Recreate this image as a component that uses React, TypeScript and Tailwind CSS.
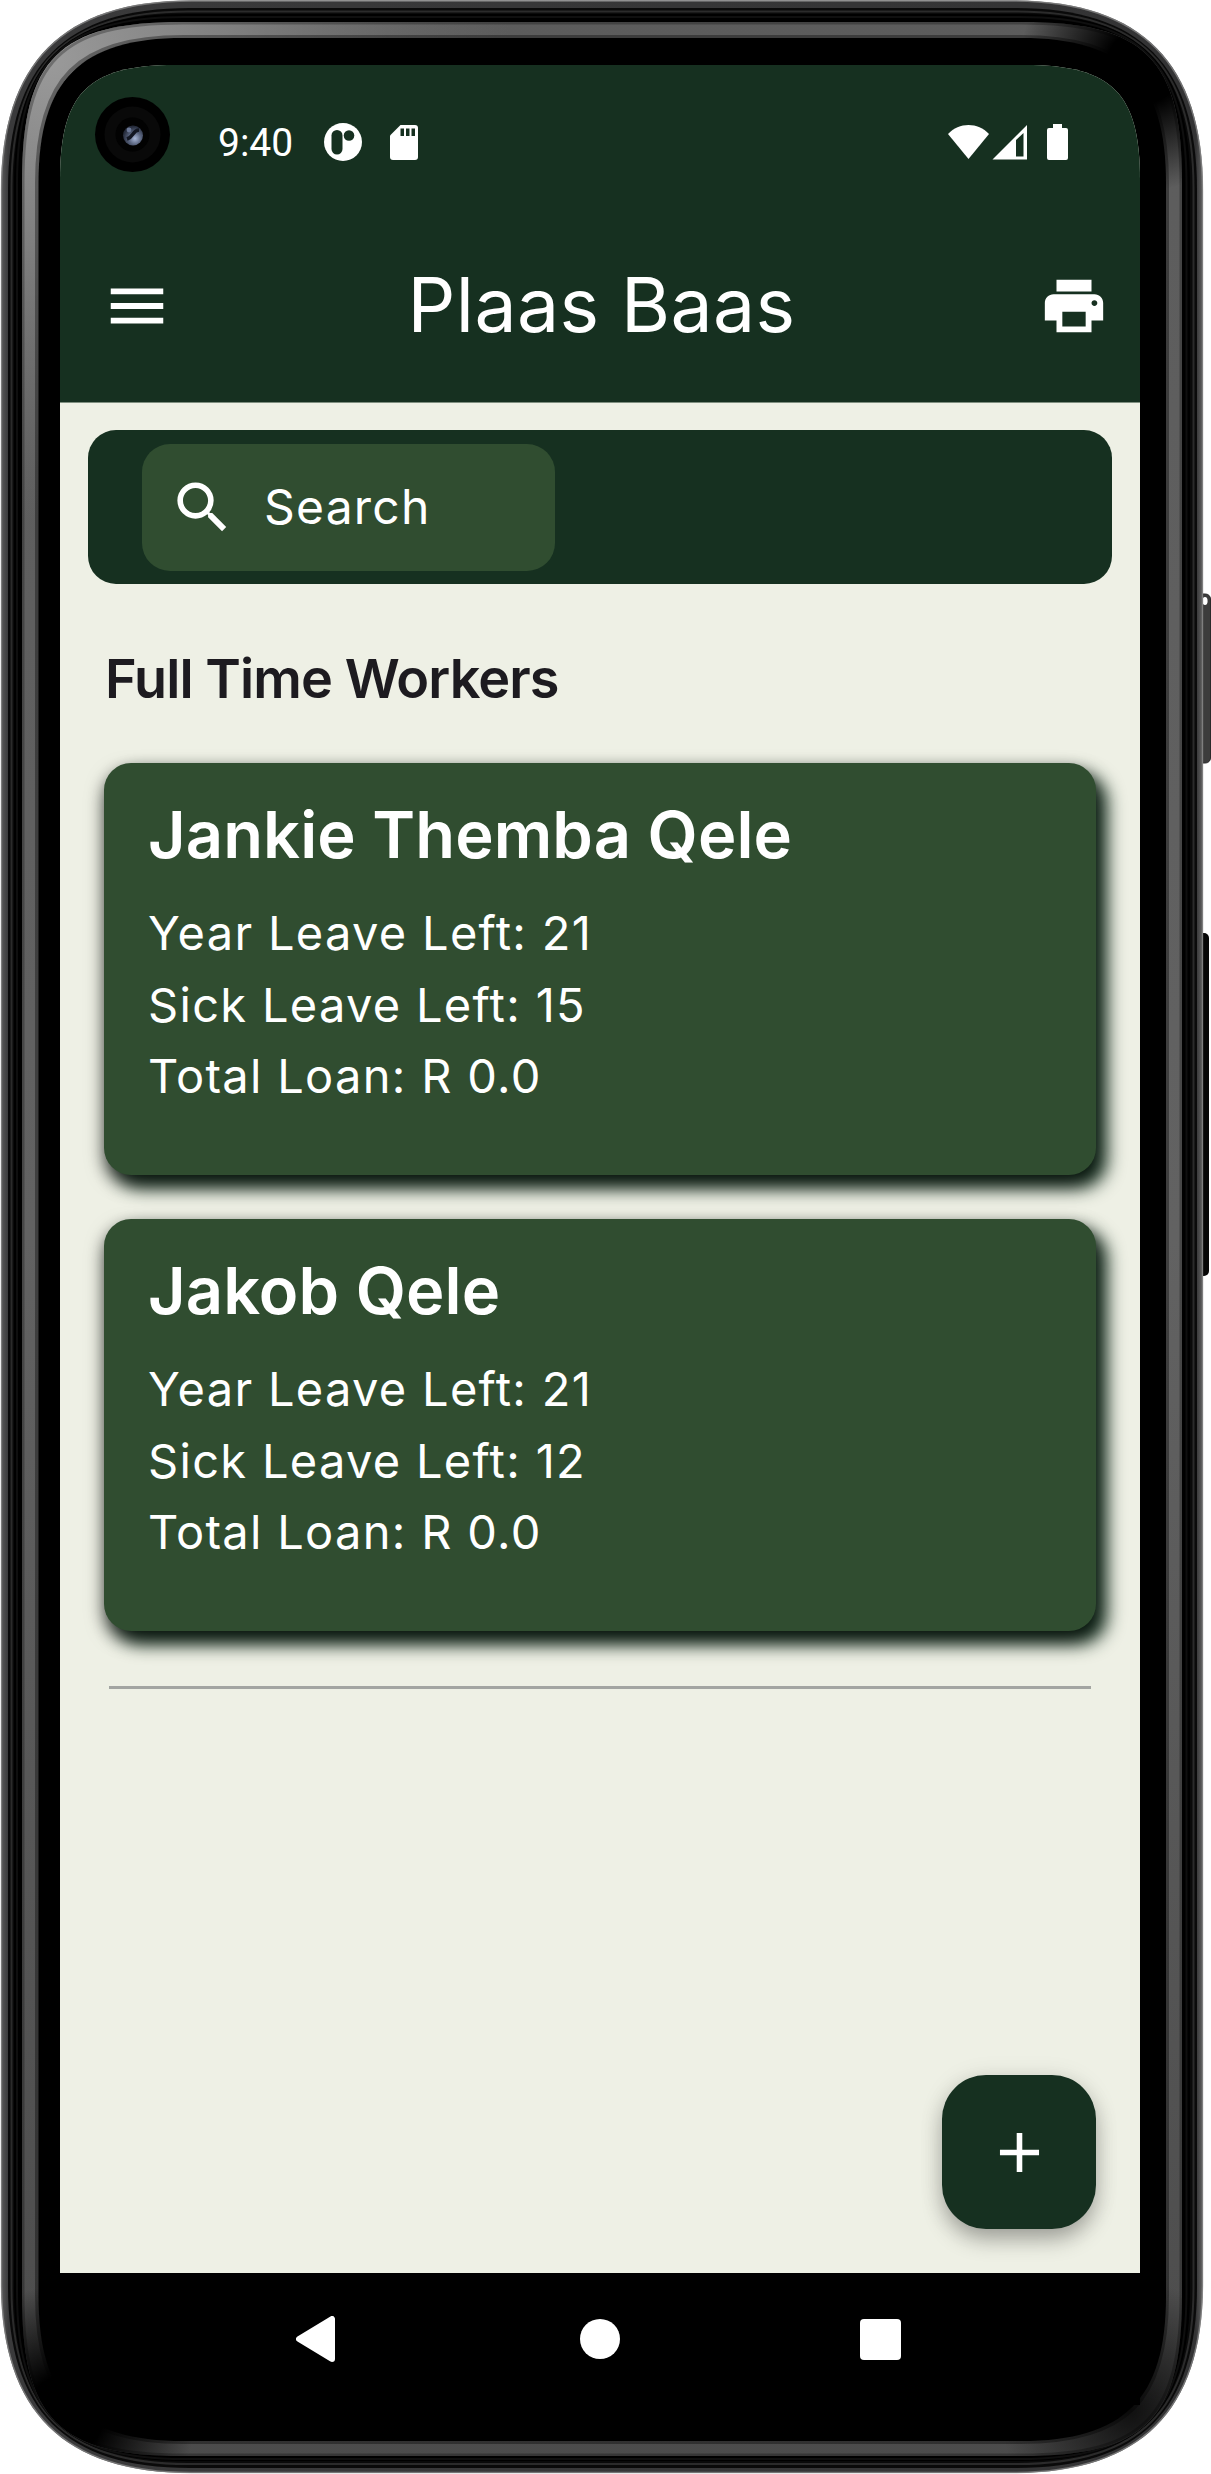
import React from "react";
import { MdAdd, MdMenu, MdPrint, MdSearch } from "react-icons/md";

type Worker = { name: string; year: number; sick: number; loan: string };

const workers: Worker[] = [
  { name: "Jankie Themba Qele", year: 21, sick: 15, loan: "0.0" },
  { name: "Jakob Qele", year: 21, sick: 12, loan: "0.0" },
];

/* Rounded rectangle with softened corners: e = corner extent, k = control offset */
function shell(x0: number, y0: number, x1: number, y1: number, e: number, k: number) {
  return `M${x0} ${y0 + e}C${x0} ${y0 + k} ${x0 + k} ${y0} ${x0 + e} ${y0}H${x1 - e}C${x1 - k} ${y0} ${x1} ${y0 + k} ${x1} ${y0 + e}V${y1 - e}C${x1} ${y1 - k} ${x1 - k} ${y1} ${x1 - e} ${y1}H${x0 + e}C${x0 + k} ${y1} ${x0} ${y1 - k} ${x0} ${y1 - e}Z`;
}

function PhoneBody() {
  return (
    <svg className="absolute inset-0 h-full w-full" viewBox="0 0 1211 2474" aria-hidden="true">
      <defs>
        <linearGradient id="side" x1="0" x2="1" y1="0" y2="0">
          <stop offset="0" stopColor="#5a5a5a" />
          <stop offset="0.006" stopColor="#3a3a3b" />
          <stop offset="0.994" stopColor="#333334" />
          <stop offset="1" stopColor="#626262" />
        </linearGradient>
        <linearGradient id="band" gradientUnits="userSpaceOnUse" x1="0" y1="0" x2="0" y2="2474">
          <stop offset="0" stopColor="#5c5c5c" />
          <stop offset="0.5" stopColor="#626262" />
          <stop offset="1" stopColor="#4b4b4b" />
        </linearGradient>
        <radialGradient id="glow" gradientUnits="userSpaceOnUse" cx="50" cy="60" r="460">
          <stop offset="0" stopColor="#9a9a9a" />
          <stop offset="0.4" stopColor="#888888" stopOpacity="0.8" />
          <stop offset="1" stopColor="#777777" stopOpacity="0" />
        </radialGradient>
        <radialGradient id="shadeTR" gradientUnits="userSpaceOnUse" cx="1144" cy="66" r="125">
          <stop offset="0" stopColor="#000" />
          <stop offset="0.3" stopColor="#000" />
          <stop offset="1" stopColor="#000" stopOpacity="0" />
        </radialGradient>
        <radialGradient id="shadeBL" gradientUnits="userSpaceOnUse" cx="65" cy="2415" r="130">
          <stop offset="0" stopColor="#000" />
          <stop offset="0.3" stopColor="#000" />
          <stop offset="1" stopColor="#000" stopOpacity="0" />
        </radialGradient>
        <radialGradient id="shadeBR" gradientUnits="userSpaceOnUse" cx="1130" cy="2410" r="130">
          <stop offset="0" stopColor="#000" stopOpacity="0.8" />
          <stop offset="1" stopColor="#000" stopOpacity="0" />
        </radialGradient>
        <radialGradient id="lens" cx="0.6" cy="0.65" r="0.6">
          <stop offset="0" stopColor="#a9b8d8" />
          <stop offset="0.5" stopColor="#5b6680" />
          <stop offset="1" stopColor="#262c3c" />
        </radialGradient>
      </defs>
      <rect x="1196" y="594" width="14.5" height="169" rx="5" fill="#3c3c3c" stroke="#2a2a2a" />
      <ellipse cx="1205" cy="601" rx="2.6" ry="4" fill="#fff" />
      <rect x="1196" y="933" width="13" height="343" rx="5" fill="#060606" />
      <path d={shell(1, 0.5, 1203, 2473, 190, 62)} fill="url(#side)" />
      <path d={shell(1.5, 1, 1202.5, 2472.5, 190, 62)} fill="none" stroke="#8a8a8a" strokeWidth="1.4" opacity="0.75" />
      <path d={shell(8, 8, 1197, 2468, 182, 57)} fill="#0a0a0a" />
      <path d={shell(11.5, 11.5, 1193.5, 2464, 176, 54)} fill="none" stroke="#2b2b2b" strokeWidth="2" />
      <path d={shell(14, 14, 1190, 2461, 170, 50)} fill="#000" />
      <path d={shell(17, 17, 1186.5, 2459, 167, 46)} fill="none" stroke="#0f0f0f" strokeWidth="2" />
      <path d={shell(22, 22, 1182, 2456, 160, 37)} fill="url(#band)" />
      <path d={shell(22, 22, 1182, 2456, 160, 37)} fill="url(#glow)" />
      <path d={shell(23, 23, 1181, 2455, 160, 38)} fill="none" stroke="#000" strokeOpacity="0.28" strokeWidth="3" />
      <path d={shell(37, 37, 1167, 2442, 146, 41)} fill="none" stroke="#000" strokeOpacity="0.35" strokeWidth="4" />
      <path d={shell(22, 22, 1182, 2456, 160, 37)} fill="url(#shadeTR)" />
      <path d={shell(22, 22, 1182, 2456, 160, 37)} fill="url(#shadeBL)" />
      <path d={shell(22, 22, 1182, 2456, 160, 37)} fill="url(#shadeBR)" />
      <path d={shell(38.5, 38, 1166, 2441, 145, 42)} fill="#000" />
    </svg>
  );
}

function Camera() {
  return (
    <svg className="absolute left-[34px] top-[31px] h-[77px] w-[77px]" viewBox="0 0 77 77" aria-hidden="true">
      <circle cx="38.5" cy="38.5" r="37.5" fill="#000" />
      <circle cx="38.5" cy="38.5" r="28" fill="#090909" />
      <circle cx="38.5" cy="38.5" r="17" fill="#020202" />
      <circle cx="39" cy="39.5" r="10" fill="url(#lens)" />
      <path d="M33 43c3-1 4-2 6-5s4-4 6-4" stroke="#131722" strokeWidth="3.5" fill="none" />
      <circle cx="35" cy="34" r="2.4" fill="#6b7896" />
    </svg>
  );
}

function StatusBar() {
  return (
    <div className="flex h-[154px] items-center pl-[158px] pr-[72px] text-white">
      <span className="pt-[2px] font-[Roboto,sans-serif] text-[39px] leading-none">9:40</span>
      <svg className="ml-[31px] h-[38px] w-[38px]" viewBox="0 0 38 38">
        <circle cx="19" cy="19" r="19" fill="#fff" />
        <rect x="7.5" y="7" width="11" height="24.5" rx="5.5" fill="#163020" />
        <circle cx="25" cy="12.5" r="5.3" fill="#163020" />
      </svg>
      <svg className="ml-[28px] h-[35px] w-[28px]" viewBox="0 0 28 35">
        <path d="M10.5 0H25a3 3 0 0 1 3 3v29a3 3 0 0 1-3 3H3a3 3 0 0 1-3-3V10.5Z" fill="#fff" />
        <path d="M10.5 3.5H14V11h-3.5ZM16 3.5h3.5V11H16ZM21.5 3.5H25V11h-3.5Z" fill="#163020" />
      </svg>
      <svg className="ml-auto h-[36px] w-[120px]" viewBox="0 0 120 36" fill="#fff">
        <path d="M0 10C11-2 30-2 41 10L20.5 35Z" />
        <path fillRule="evenodd" d="M44.5 35.5 79 1V35.5ZM68 16v16.500h7.5V9Z" />
        <path d="M105 0h9v4h4a2 2 0 0 1 2 2v28a2 2 0 0 1-2 2h-17a2 2 0 0 1-2-2V6a2 2 0 0 1 2-2h4Z" />
      </svg>
    </div>
  );
}

function WorkerCard({ worker }: { worker: Worker }) {
  return (
    <article className="h-[412px] rounded-[27px] bg-[#304D30] pl-[44px] pt-[32px] text-white shadow-[0px_8px_18px_0px_rgba(0,0,0,0.6),10px_12px_18px_1px_#163020]">
      <h2 className="mb-[22px] whitespace-nowrap text-[65px] font-semibold leading-[80px] tracking-[0.1px]">{worker.name}</h2>
      <div className="whitespace-nowrap text-[47px] leading-[71.5px] tracking-[1.3px]">
        <p>Year Leave Left: {worker.year}</p>
        <p>Sick Leave Left: {worker.sick}</p>
        <p>Total Loan: R {worker.loan}</p>
      </div>
    </article>
  );
}

export default function App() {
  return (
    <div className="relative h-[2474px] w-[1211px] overflow-hidden bg-white font-[Inter,sans-serif]">
      <PhoneBody />
      <div className="relative ml-[60px] flex h-[2474px] w-[1080px] flex-col pt-[65px]">
        <div className="relative flex h-[2208px] flex-col bg-[#EEF0E5] [clip-path:path('M0_115C0_28_28_0_115_0H965C1052_0_1080_28_1080_115V2208H0Z')]">
          <header className="h-[338px] shrink-0 border-b border-[#7f8f80] bg-[#163020] text-white">
            <StatusBar />
            <div className="flex h-[174px] items-center justify-between pl-[42px] pr-[31px]">
              <MdMenu size={70} />
              <h1 className="mb-[3px] mr-[8px] whitespace-nowrap text-[75px] leading-none tracking-[0.4px]">Plaas Baas</h1>
              <MdPrint size={70} />
            </div>
          </header>

          <main className="relative flex-1 px-[28px] pt-[27px]">
            <div className="flex h-[154px] items-center rounded-[28px] bg-[#163020] pl-[54px]">
              <div className="flex h-[127px] w-[413px] items-center rounded-[28px] bg-[#304D30] pl-[27px] text-white">
                <MdSearch size={67} />
                <span className="ml-[28px] text-[48px] leading-none tracking-[1.2px]">Search</span>
              </div>
            </div>
            <section className="px-4">
              <h2 className="mt-[63px] whitespace-nowrap pl-[1px] text-[54px] font-semibold leading-[64px] tracking-[-0.9px] text-[#1D1B20]">
                Full Time Workers
              </h2>
              <div className="mt-[52px] flex flex-col gap-[44px]">
                {workers.map((w) => (
                  <WorkerCard key={w.name} worker={w} />
                ))}
              </div>
              <hr className="mx-[5px] mt-[55px] border-t-[3px] border-[#a3a5a2]" />
            </section>
            <button className="absolute bottom-[44px] right-[44px] flex h-[154px] w-[154px] items-center justify-center rounded-[44px] bg-[#163020] text-white shadow-[0_12px_22px_-2px_rgba(0,0,0,0.3),0_2px_24px_0_rgba(0,0,0,0.1)]">
              <MdAdd size={67} />
            </button>
          </main>
          <Camera />
        </div>

        <nav className="flex h-[132px] items-center justify-between bg-black pl-[236px] pr-[239px]">
          <svg className="h-[46px] w-[39px]" viewBox="0 0 39 46">
            <path d="M3 23 36 3V43Z" fill="#fff" stroke="#fff" strokeWidth="6" strokeLinejoin="round" />
          </svg>
          <span className="ml-[5px] h-[40px] w-[40px] rounded-full bg-white" />
          <span className="h-[41px] w-[41px] rounded-[4px] bg-white" />
        </nav>
      </div>
    </div>
  );
}
